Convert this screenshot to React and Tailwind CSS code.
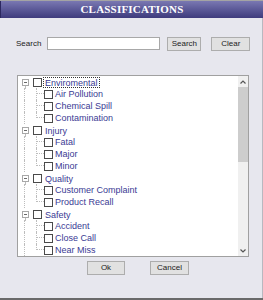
import React from 'react';

const groups = [
  { label: 'Enviromental', items: ['Air Pollution', 'Chemical Spill', 'Contamination'], focused: true },
  { label: 'Injury', items: ['Fatal', 'Major', 'Minor'] },
  { label: 'Quality', items: ['Customer Complaint', 'Product Recall'] },
  { label: 'Safety', items: ['Accident', 'Close Call', 'Near Miss'] },
];

function Box() {
  return <div className="w-[9px] h-[9px] shrink-0 border border-[#4a4a4a] bg-white" />;
}

function RootLine() {
  return (
    <div className="flex w-[11px] h-full shrink-0">
      <div className="w-[6px]" />
      <div className="h-full border-l border-dotted border-[#bdbdbd]" />
    </div>
  );
}

function ParentRow({ label, focused }) {
  return (
    <div className="flex items-center h-[12px]">
      <div className="flex flex-col items-center w-[13px] h-full shrink-0 pl-[1px]">
        <div className="h-[3px]" />
        <div className="w-[7px] h-[7px] border border-[#a8a8a8] bg-white flex items-center justify-center">
          <div className="w-[3px] h-px bg-[#6a6a6a]" />
        </div>
        <div className="flex-1 border-l border-dotted border-[#bdbdbd]" />
      </div>
      <div className="ml-[2px]"><Box /></div>
      <span
        className={
          'ml-[1px] px-[1px] h-[11px] leading-[10px] text-[9px] text-[#3a3a94] ' +
          (focused ? 'border border-dotted border-[#333]' : 'border border-transparent')
        }
      >
        {label}
      </span>
    </div>
  );
}

function ChildRow({ label, last }) {
  return (
    <div className="flex items-center h-[12px]">
      <RootLine />
      <div className="flex w-[15px] h-full shrink-0">
        <div className="w-[7px]" />
        <div className={'flex-1 flex flex-col ' + (last ? '' : 'border-l border-dotted border-[#bdbdbd]')}>
          <div className={'h-[6px] border-b border-dotted border-[#bdbdbd] ' + (last ? 'border-l' : '')} />
        </div>
      </div>
      <Box />
      <span className="ml-[2px] text-[9px] leading-[10px] text-[#3a3a94]">{label}</span>
    </div>
  );
}

function Btn({ children, w }) {
  return (
    <button
      className={
        w +
        ' h-[14px] bg-[#e1e1e1] border border-[#adadad] text-[8px] leading-[12px] text-[#222] flex items-center justify-center'
      }
    >
      {children}
    </button>
  );
}

export default function App() {
  return (
    <div
      className="w-[263px] h-[300px] flex flex-col bg-[#e7e7ee] overflow-hidden"
      style={{ fontFamily: "'Liberation Sans', Arial, sans-serif" }}
    >
      <div className="h-px bg-[#a4a4a4]" />
      <div className="h-[17px] flex items-center justify-center border-l border-[#2c2860] bg-gradient-to-b from-[#7a78b2] to-[#3f3b7d]">
        <span
          className="text-[11px] font-bold text-white tracking-[0.2px]"
          style={{ fontFamily: "'Liberation Serif', 'Times New Roman', serif" }}
        >
          CLASSIFICATIONS
        </span>
      </div>

      <div className="flex-1 flex flex-col border-r border-[#b8b8c0]">
        {/* Search row */}
        <div className="flex items-center h-[13px] mt-[19px]">
          <span className="ml-[16px] text-[8px] text-[#222]">Search</span>
          <input className="ml-[6px] w-[113px] h-[13px] bg-white border border-[#a8a8a8] outline-none" />
          <div className="ml-[7px]">
            <Btn w="w-[34px]">Search</Btn>
          </div>
          <div className="ml-[10px]">
            <Btn w="w-[39px]">Clear</Btn>
          </div>
        </div>

        {/* Tree */}
        <div className="ml-[17px] mt-[25px] w-[232px] h-[182px] flex border border-[#a0a0a0] bg-white">
          <div className="flex-1 flex flex-col overflow-hidden">
            {groups.map((g) => (
              <div key={g.label} className="flex flex-col">
                <ParentRow label={g.label} focused={g.focused} />
                {g.items.map((it, i) => (
                  <ChildRow key={it} label={it} last={i === g.items.length - 1} />
                ))}
              </div>
            ))}
          </div>
          <div className="w-[10px] flex flex-col bg-[#f0f0f0]">
            <div className="h-[11px] flex items-center justify-center">
              <svg width="6" height="4" viewBox="0 0 6 4">
                <path d="M0.5 3.5 L3 1 L5.5 3.5" fill="none" stroke="#555" strokeWidth="1.2" />
              </svg>
            </div>
            <div className="h-[75px] bg-[#cdcdcd]" />
            <div className="flex-1" />
            <div className="h-[11px] flex items-center justify-center">
              <svg width="6" height="4" viewBox="0 0 6 4">
                <path d="M0.5 0.5 L3 3 L5.5 0.5" fill="none" stroke="#555" strokeWidth="1.2" />
              </svg>
            </div>
          </div>
        </div>

        {/* Buttons */}
        <div className="flex mt-[4px]">
          <div className="ml-[87px]">
            <Btn w="w-[38px]">Ok</Btn>
          </div>
          <div className="ml-[25px]">
            <Btn w="w-[39px]">Cancel</Btn>
          </div>
        </div>
      </div>
      <div className="h-[2px] bg-[#6a6a6a]" />
    </div>
  );
}
